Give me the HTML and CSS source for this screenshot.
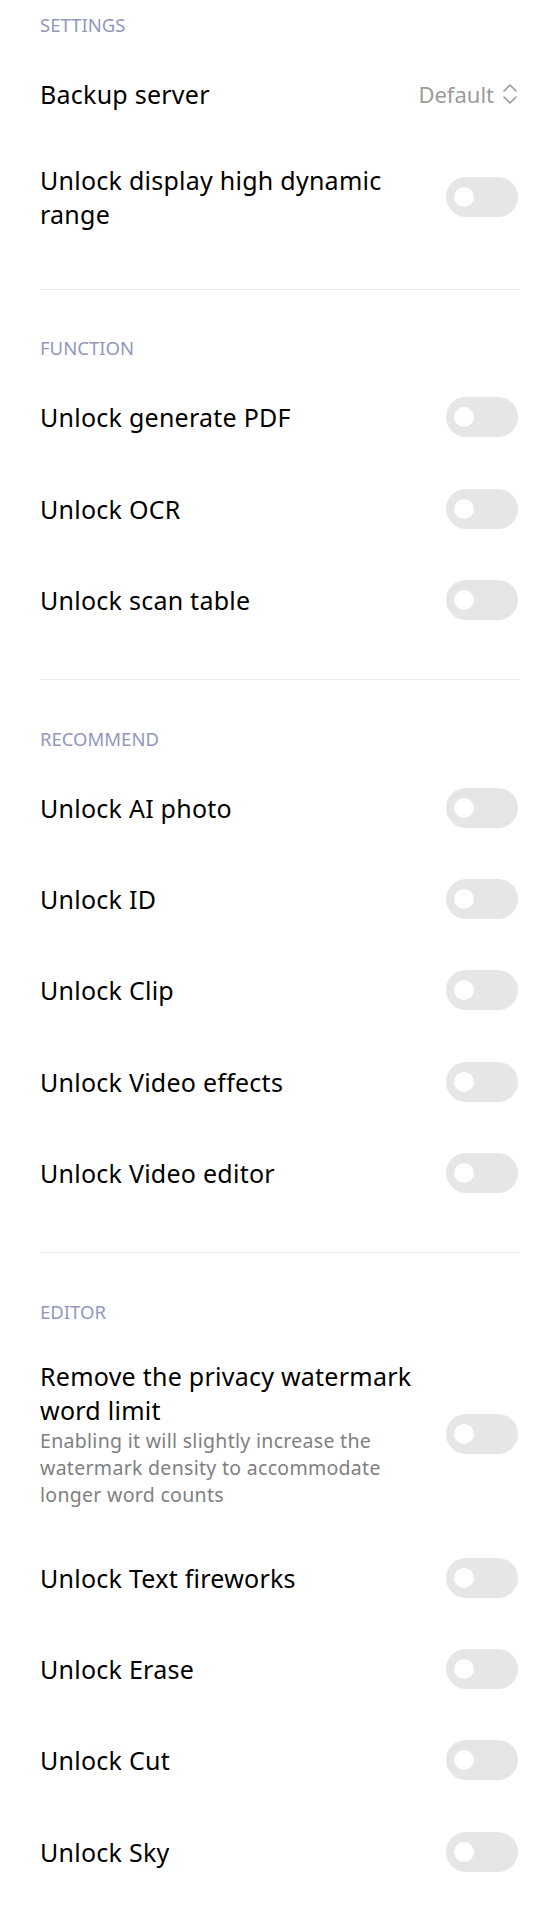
FILE: index.html
```html
<!DOCTYPE html>
<html lang="en">
<head>
<meta charset="utf-8">
<title>Settings</title>
<link rel="stylesheet" href="styles.css">
</head>
<body>
<div class="page">
  <section class="section">
    <div class="section-title">SETTINGS</div>
    <div class="row">
      <div class="row-text"><div class="row-title">Backup server</div></div>
      <div class="select">
        <span class="select-value">Default</span>
        <svg class="select-icon" width="16" height="22" viewBox="0 0 16 22" fill="none" stroke="#9a9a9a" stroke-width="1.6" stroke-linecap="round" stroke-linejoin="round"><path d="M2 8 L8 2 L14 8"/><path d="M2 14 L8 20 L14 14"/></svg>
      </div>
    </div>
    <div class="row row-multi">
      <div class="row-text"><div class="row-title">Unlock display high dynamic range</div></div>
      <div class="toggle"><span class="knob"></span></div>
    </div>
  </section>
  <hr class="divider">
  <section class="section">
    <div class="section-title">FUNCTION</div>
    <div class="row"><div class="row-text"><div class="row-title">Unlock generate PDF</div></div><div class="toggle"><span class="knob"></span></div></div>
    <div class="row"><div class="row-text"><div class="row-title">Unlock OCR</div></div><div class="toggle"><span class="knob"></span></div></div>
    <div class="row"><div class="row-text"><div class="row-title">Unlock scan table</div></div><div class="toggle"><span class="knob"></span></div></div>
  </section>
  <hr class="divider">
  <section class="section">
    <div class="section-title">RECOMMEND</div>
    <div class="row"><div class="row-text"><div class="row-title">Unlock AI photo</div></div><div class="toggle"><span class="knob"></span></div></div>
    <div class="row"><div class="row-text"><div class="row-title">Unlock ID</div></div><div class="toggle"><span class="knob"></span></div></div>
    <div class="row"><div class="row-text"><div class="row-title">Unlock Clip</div></div><div class="toggle"><span class="knob"></span></div></div>
    <div class="row"><div class="row-text"><div class="row-title">Unlock Video effects</div></div><div class="toggle"><span class="knob"></span></div></div>
    <div class="row"><div class="row-text"><div class="row-title">Unlock Video editor</div></div><div class="toggle"><span class="knob"></span></div></div>
  </section>
  <hr class="divider">
  <section class="section">
    <div class="section-title">EDITOR</div>
    <div class="row row-multi">
      <div class="row-text">
        <div class="row-title">Remove the privacy watermark word limit</div>
        <div class="row-desc">Enabling it will slightly increase the watermark density to accommodate longer word counts</div>
      </div>
      <div class="toggle"><span class="knob"></span></div>
    </div>
    <div class="row"><div class="row-text"><div class="row-title">Unlock Text fireworks</div></div><div class="toggle"><span class="knob"></span></div></div>
    <div class="row"><div class="row-text"><div class="row-title">Unlock Erase</div></div><div class="toggle"><span class="knob"></span></div></div>
    <div class="row"><div class="row-text"><div class="row-title">Unlock Cut</div></div><div class="toggle"><span class="knob"></span></div></div>
    <div class="row"><div class="row-text"><div class="row-title">Unlock Sky</div></div><div class="toggle"><span class="knob"></span></div></div>
  </section>
</div>
</body>
</html>
```
FILE: styles.css
```css
* { box-sizing: border-box; }
html, body { margin: 0; padding: 0; background: #ffffff; }
body {
  font-family: "Noto Sans", "Liberation Sans", sans-serif;
  color: #000000;
}
.page { width: 560px; }
.section { padding: 0 42px 0 40px; }
.section-title {
  height: 48px;
  display: flex;
  align-items: center;
  font-size: 18.5px;
  color: #9297bd;
}
.row {
  min-height: 91.3px;
  display: flex;
  align-items: center;
  justify-content: space-between;
  gap: 24px;
}
.row-multi { padding: 24px 0; }
.row-text { flex: 1; min-width: 0; }
.row-multi .row-text { padding-right: 10px; }
.row-title {
  font-size: 25px;
  line-height: 34px;
  letter-spacing: 0.25px;
  color: #000;
}
.row-desc {
  font-size: 19.5px;
  line-height: 27px;
  letter-spacing: 0.3px;
  color: #808080;
}
.select { display: flex; align-items: center; gap: 8px; }
.select-value { font-size: 22px; color: #9a9a9a; }
.select-icon { display: block; }
.toggle {
  flex: none;
  width: 72px;
  height: 40px;
  border-radius: 20px;
  background: #e6e6e6;
  display: flex;
  align-items: center;
  padding-left: 8px;
}
.knob {
  width: 20px;
  height: 20px;
  border-radius: 50%;
  background: #ffffff;
}
.divider {
  margin: 33.75px 40px;
  border: 0;
  height: 1px;
  background: #ececec;
}
```
